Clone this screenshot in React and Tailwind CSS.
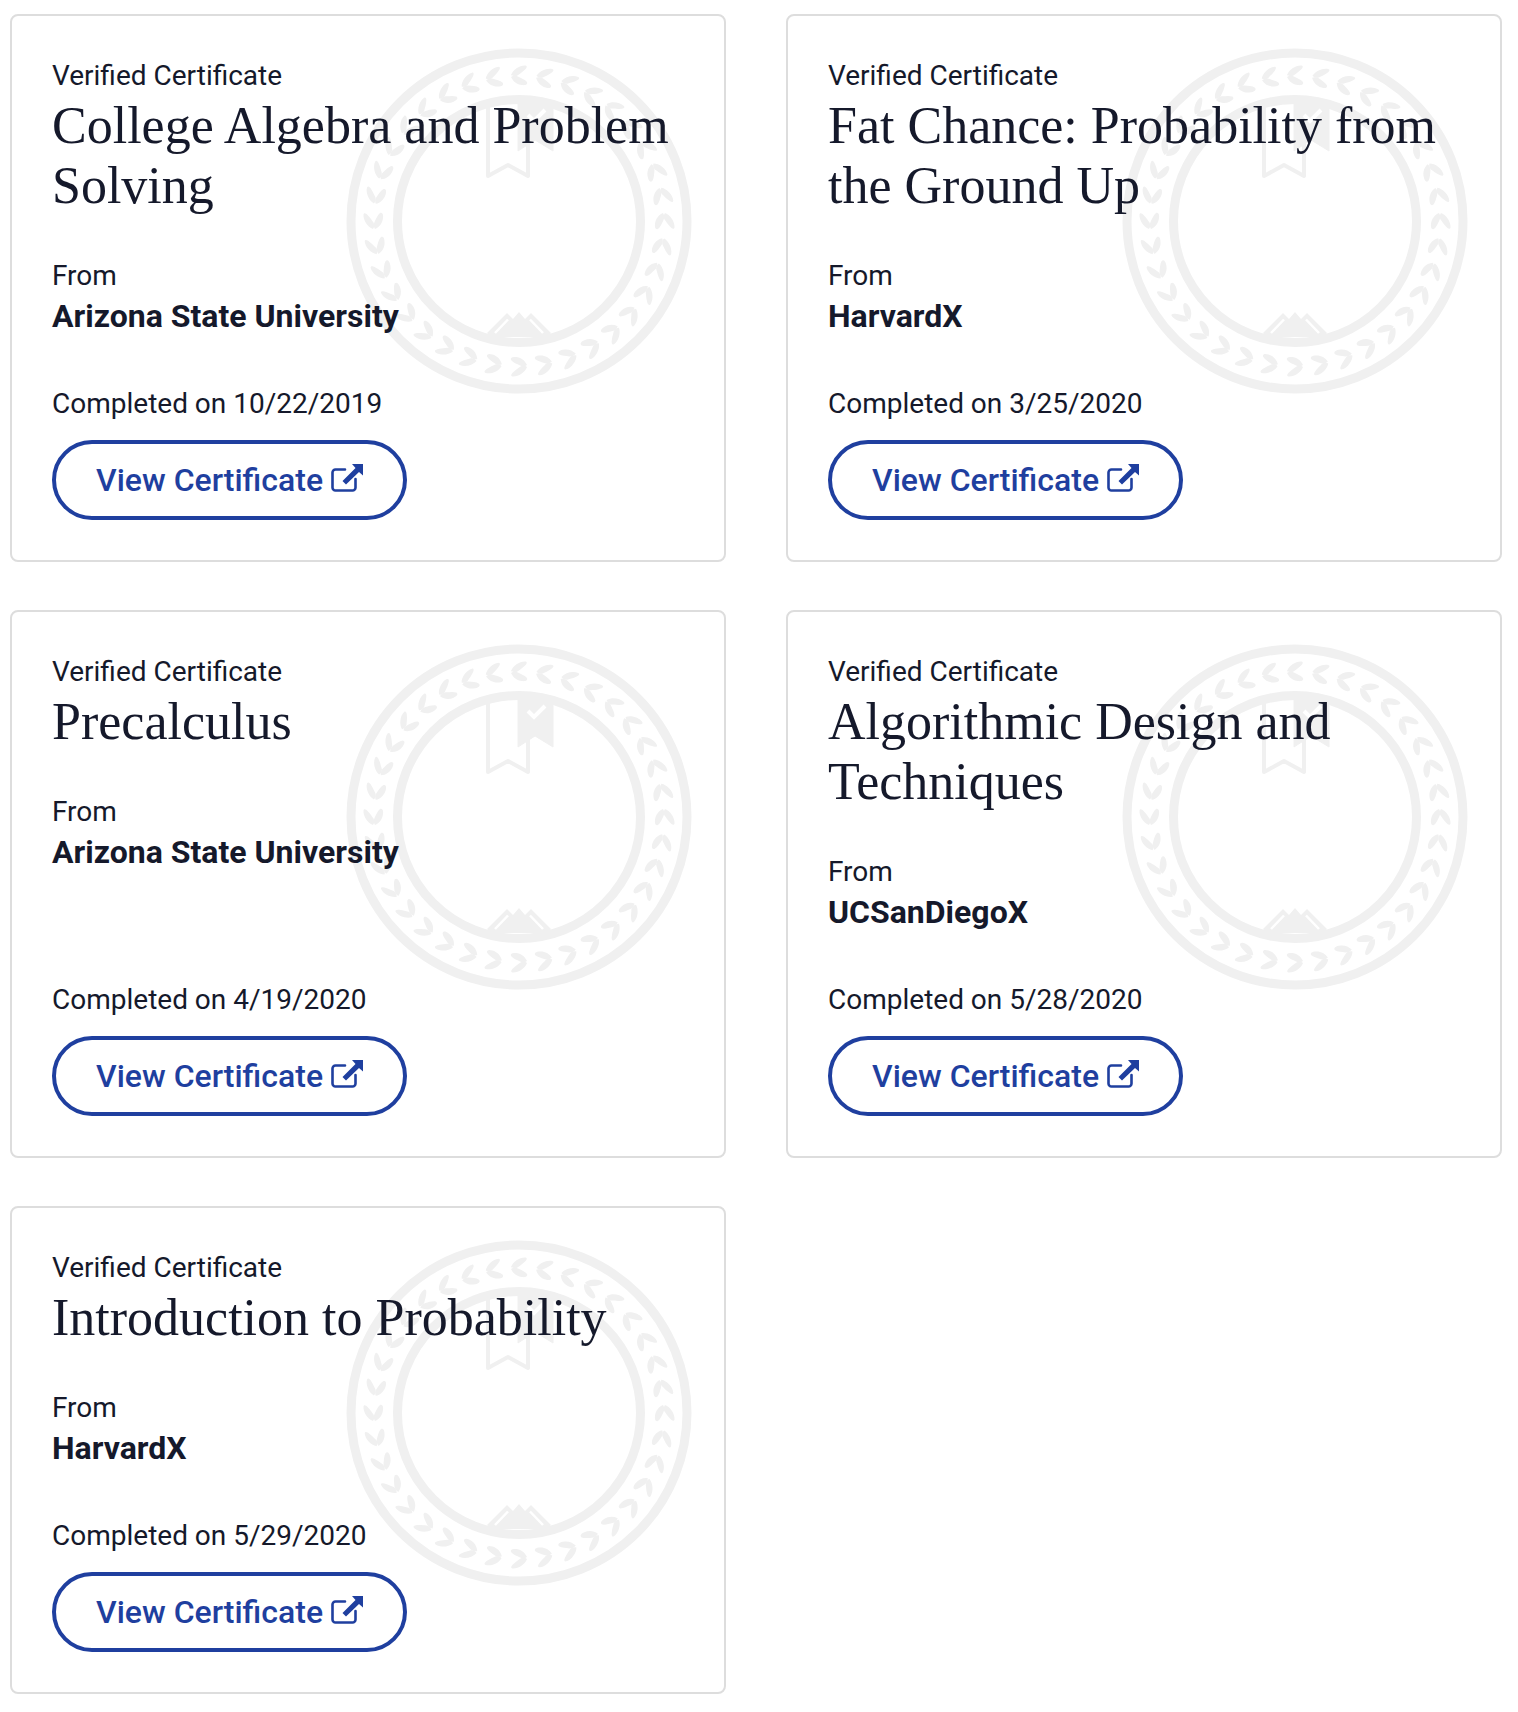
import React from 'react';

const certificates = [
  { title: 'College Algebra and Problem Solving', school: 'Arizona State University', date: '10/22/2019' },
  { title: 'Fat Chance: Probability from the Ground Up', school: 'HarvardX', date: '3/25/2020' },
  { title: 'Precalculus', school: 'Arizona State University', date: '4/19/2020' },
  { title: 'Algorithmic Design and Techniques', school: 'UCSanDiegoX', date: '5/28/2020' },
  { title: 'Introduction to Probability', school: 'HarvardX', date: '5/29/2020' },
];

const leafAngles = Array.from({ length: 36 }, (_, i) => i * 10);

function Seal() {
  return (
    <svg
      className="absolute top-[32px] right-[32px] w-[346px] h-[346px]"
      viewBox="-173 -173 346 346"
      fill="#f0f0f0"
    >
      <defs>
        <clipPath id="seal-inner">
          <circle cx="0" cy="0" r="118" />
        </clipPath>
      </defs>
      <circle cx="0" cy="0" r="168" fill="none" stroke="#f0f0f0" strokeWidth="9" />
      <circle cx="0" cy="0" r="121.5" fill="none" stroke="#f0f0f0" strokeWidth="9" />
      {leafAngles.map((a) => (
        <g key={a} transform={`rotate(${a}) translate(0 -145)`}>
          <path d="M-8 -1C-6 -6.5 1 -11 6.5 -10.5C9 -10 7.5 -7.5 5 -5.5C3 -3.5 1 -2.5 -1.5 -0.5C-3 0.5 -6.5 0.5 -8 -1Z" />
          <path d="M-8 1C-6 -0.5 -3 -0.5 -1 0.5C2 2 6 3.5 8 6C9 8.5 6.5 9.5 3 9C-2 8.5 -6 5.5 -8 1Z" />
        </g>
      ))}
      <g clipPath="url(#seal-inner)">
        {/* outlined ribbon */}
        <path
          d="M-31 -125V-45L-11 -56L9 -45V-125"
          fill="none"
          stroke="#f0f0f0"
          strokeWidth="4"
          strokeLinejoin="round"
        />
        {/* filled ribbon with tick */}
        <path d="M-1 -125V-70L16 -81L34 -70V-125Z" stroke="#f0f0f0" strokeWidth="1" strokeLinejoin="round" />
        <path d="M9 -106L15 -100L26 -111" fill="none" stroke="#ffffff" strokeWidth="4" />
        {/* mountains */}
        <path d="M-32 112L-12 92L-6 98L0 91L6 98L12 92L32 112L28 116H-28Z" />
        <path d="M-24 112L-11 98.5M24 112L11 98.5" fill="none" stroke="#ffffff" strokeWidth="2.5" />
      </g>
    </svg>
  );
}

function LinkIcon() {
  return (
    <svg className="w-[32px] h-[28px] shrink-0 ml-[8px] -mt-[5px]" viewBox="0 0 32 28" fill="none">
      <path
        d="M14 5.5H4.5A3 3 0 0 0 1.5 8.5V23.5A3 3 0 0 0 4.5 26.5H21.5A3 3 0 0 0 24.5 23.5V15"
        stroke="#1f3f9f"
        strokeWidth="2.6"
        strokeLinecap="round"
      />
      <path d="M21 0H32V11.5L28 8L15 20.5L11.5 17L24.5 4Z" fill="#1f3f9f" />
    </svg>
  );
}

function CertificateCard({ title, school, date }) {
  return (
    <div className="relative flex flex-col border-2 border-[#dddddd] rounded-[8px] bg-white pt-[41px] pb-[40px] px-[40px] font-['Roboto',sans-serif] text-[#15192b]">
      <Seal />
      <div className="relative flex flex-col grow">
        <div className="text-[28px] leading-[38px]">Verified Certificate</div>
        <h2 className="mt-[1px] font-['Liberation_Serif',serif] font-normal text-[52px] leading-[60px]">{title}</h2>
        <div className="mt-[41px] text-[28px] leading-[38px]">From</div>
        <div className="mt-[2px] text-[32px] leading-[38px] font-bold">{school}</div>
        <div className="mt-auto pt-[50px] text-[28px] leading-[38px]">Completed on {date}</div>
        <a className="mt-[17px] w-[355px] h-[80px] flex items-center justify-center border-4 border-[#1f3f9f] rounded-full text-[#1f3f9f] text-[32px] font-medium">
          View Certificate
          <LinkIcon />
        </a>
      </div>
    </div>
  );
}

export default function App() {
  return (
    <div className="grid grid-cols-[716px_716px] gap-x-[60px] gap-y-[48px] pt-[14px] pl-[10px] bg-white min-h-[1712px] content-start">
      {certificates.map((c) => (
        <CertificateCard key={c.title} {...c} />
      ))}
    </div>
  );
}
